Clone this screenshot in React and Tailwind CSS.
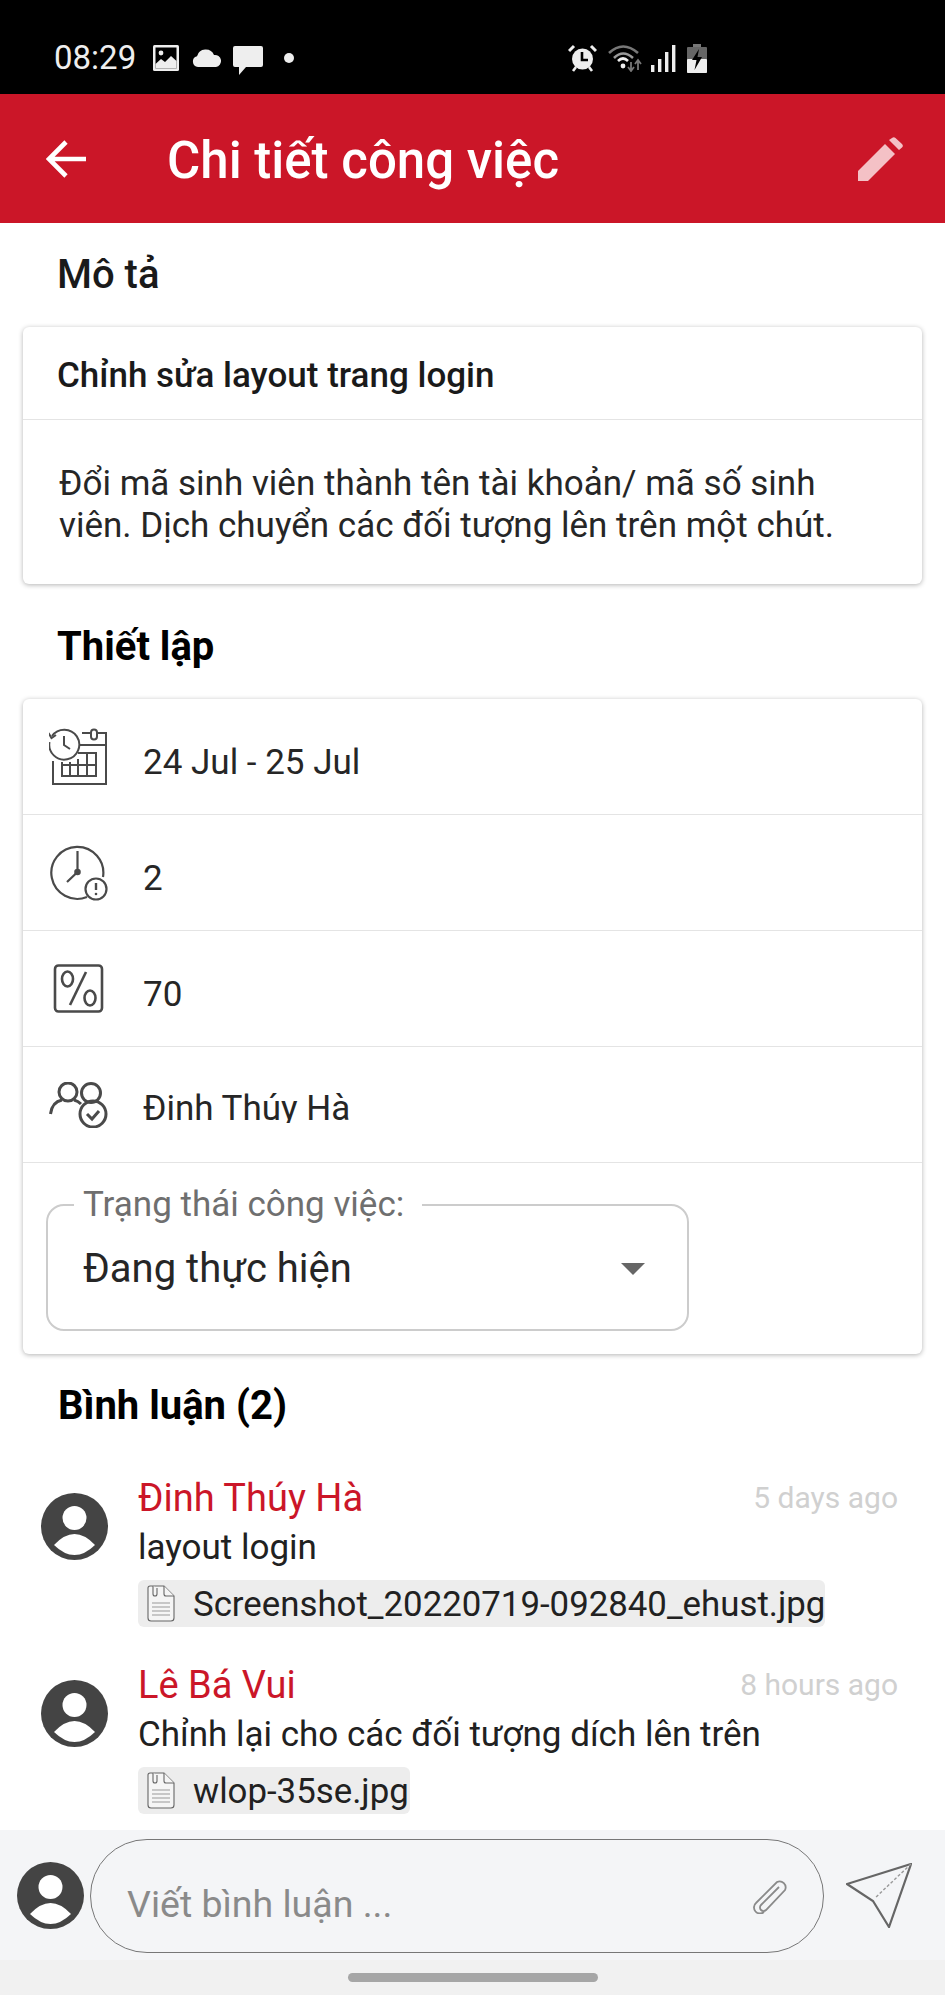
function ImageIcon() {
  return (
    <svg className="w-[26px] h-[27px] shrink-0" viewBox="0 0 26 27">
      <rect x="0" y="0" width="26" height="26" rx="1.5" fill="#eee" />
      <rect x="2.5" y="2.5" width="21" height="21" fill="#000" />
      <circle cx="8" cy="8" r="2.4" fill="#eee" />
      <path d="M2.5 22 L2.5 19 L8 14 L12 17 L18 11 L23.5 16 L23.5 23.5 L2.5 23.5 Z" fill="#eee" />
    </svg>
  );
}

function CloudIcon() {
  return (
    <svg className="w-[30px] h-[18px] shrink-0" viewBox="0 0 30 18">
      <path d="M6 18 a5.5 5.5 0 0 1 -1 -10.8 A9 9 0 0 1 22 6 a6 6 0 0 1 2 12 Z" fill="#eee" />
    </svg>
  );
}

function BubbleIcon() {
  return (
    <svg className="w-[30px] h-[29px] shrink-0" viewBox="0 0 30 29">
      <path d="M2 0 H28 a2 2 0 0 1 2 2 V19 a2 2 0 0 1 -2 2 H13 L6 29 V21 H2 a2 2 0 0 1 -2 -2 V2 a2 2 0 0 1 2 -2 Z" fill="#eee" />
    </svg>
  );
}

function AlarmIcon() {
  return (
    <svg className="w-[29px] h-[28px] shrink-0" viewBox="0 0 29 28">
      <circle cx="14.5" cy="15" r="10.5" fill="#eee" />
      <path d="M14 8 V16 H20" stroke="#000" strokeWidth="2.6" fill="none" />
      <path d="M1 7 L6 2 M28 7 L23 2" stroke="#eee" strokeWidth="3" />
      <path d="M5 27 L8 23 M24 27 L21 23" stroke="#eee" strokeWidth="2.6" />
    </svg>
  );
}

function WifiIcon() {
  return (
    <svg className="w-[34px] h-[28px] shrink-0" viewBox="0 0 34 28">
      <path d="M1 9 Q15 -4 30 9" stroke="#777" strokeWidth="2.6" fill="none" />
      <path d="M6 14 Q15 5 25 14" stroke="#999" strokeWidth="2.6" fill="none" />
      <path d="M10 17 Q15 12 20 17" stroke="#eee" strokeWidth="2.6" fill="none" />
      <circle cx="15" cy="22" r="2.4" fill="#eee" />
      <path d="M23 18 V27 M20 23 L23 27 L26 23" stroke="#777" strokeWidth="1.8" fill="none" />
      <path d="M30 26 V17 M27 20 L30 16 L33 20" stroke="#777" strokeWidth="1.8" fill="none" />
    </svg>
  );
}

function SignalIcon() {
  return (
    <svg className="w-[25px] h-[27px] shrink-0" viewBox="0 0 25 27">
      <rect x="0" y="20" width="3.4" height="7" fill="#eee" />
      <rect x="7" y="14" width="3.4" height="13" fill="#eee" />
      <rect x="14" y="7" width="3.4" height="20" fill="#eee" />
      <rect x="21" y="0" width="3.4" height="27" fill="#eee" />
    </svg>
  );
}

function BatteryIcon() {
  return (
    <svg className="w-[20px] h-[29px] shrink-0" viewBox="0 0 20 29">
      <rect x="6" y="0" width="8" height="3" fill="#777" />
      <rect x="0" y="3" width="20" height="26" rx="1" fill="#666" />
      <rect x="0" y="15" width="20" height="14" rx="1" fill="#eee" />
      <path d="M12 5 L5 16 H9.5 L7.5 26 L15 13 H10.5 Z" fill="#000" />
    </svg>
  );
}

function CalendarClockIcon() {
  return (
    <svg className="w-[60px] h-[58px] shrink-0" viewBox="2 0 60 58" fill="none" stroke="#4a4a4a" strokeWidth="2">
      <path d="M35 5 H43 M51 5 H59 V56 H6 V33" />
      <rect x="44" y="1.5" width="6" height="10" rx="3" />
      <path d="M32 17 H59" />
      <path d="M15 34 V48 H49 V25 H31 M15 37 H49 M23 34 V48 M31 31 V48 M40 25 V48" />
      <path d="M5 8 A15 15 0 1 1 2.5 14" />
      <path d="M1.5 5 L4.5 10 L9 7" />
      <path d="M17 8 V17 L23 21" />
    </svg>
  );
}

function ClockAlertIcon() {
  return (
    <svg className="w-[60px] h-[58px] shrink-0" viewBox="0 0 60 58" fill="none" stroke="#4a4a4a" strokeWidth="2.2">
      <path d="M38 53 A26 26 0 1 1 54 33" />
      <path d="M28.5 7 V28 L18 38" />
      <circle cx="28.5" cy="28" r="2.2" fill="#4a4a4a" />
      <circle cx="47" cy="45" r="10.5" />
      <path d="M47 39 V46" strokeWidth="2.4" />
      <circle cx="47" cy="50" r="1.3" fill="#4a4a4a" stroke="none" />
    </svg>
  );
}

function PercentIcon() {
  return (
    <svg className="w-[60px] h-[50px] shrink-0" viewBox="0 0 60 50" fill="none" stroke="#4a4a4a" strokeWidth="2.6">
      <rect x="6" y="1.5" width="47" height="46" rx="3.5" />
      <ellipse cx="18.5" cy="15" rx="5.5" ry="7.5" />
      <ellipse cx="41" cy="34" rx="5.5" ry="7.5" />
      <path d="M37 8 L21 41" />
    </svg>
  );
}

function PeopleCheckIcon() {
  return (
    <svg className="w-[60px] h-[46px] shrink-0" viewBox="0 0 60 46" fill="none" stroke="#4a4a4a" strokeWidth="3">
      <circle cx="19" cy="10" r="9" />
      <path d="M1.5 32 Q3 20 13 18 M25 18 Q29 19 32 22" />
      <circle cx="42" cy="11" r="9.5" />
      <circle cx="44" cy="32" r="13" />
      <path d="M38 32 L43 37 L50 29" />
    </svg>
  );
}

function Avatar({ className }) {
  return (
    <svg className={className} viewBox="0 0 67 67">
      <circle cx="33.5" cy="33.5" r="33.5" fill="#444444" />
      <ellipse cx="33.5" cy="25" rx="12" ry="12" fill="#fff" />
      <path d="M13 52 Q33.5 30 54 52 Q33.5 72 13 52 Z" fill="#fff" />
    </svg>
  );
}

function FileIcon() {
  return (
    <svg className="w-[28px] h-[37px] shrink-0" viewBox="0 0 28 37" fill="#f5f5f5" stroke="#666" strokeWidth="1.1">
      <path d="M3 1 H17 L27 11 V33 a3 3 0 0 1 -3 3 H4 a3 3 0 0 1 -3 -3 V3 a2 2 0 0 1 2 -2 Z" />
      <path d="M17 1 V9 a2 2 0 0 0 2 2 H27" />
      <path d="M6 1 V9 a2 2 0 0 0 4 0 V3" />
      <path d="M5 18 H23 M5 22 H23 M5 26 H23 M5 30 H23" stroke="#999" />
    </svg>
  );
}

function Comment({ name, time, text, file, fileWidth, top }) {
  return (
    <div className={`flex ${top}`}>
      <div className="w-[138px] shrink-0 flex pl-[41px] pt-[15px]">
        <Avatar className="w-[67px] h-[67px]" />
      </div>
      <div className="flex-1 min-w-0 pr-[47px]">
        <div className="flex items-center justify-between h-[40px]">
          <span className="text-[38px] text-[#cb1628] leading-[40px]">{name}</span>
          <span className="text-[30px] text-[#d0d0d0] leading-[40px]">{time}</span>
        </div>
        <p className="text-[35px] text-[#212121] leading-[40px] mt-[10px]">{text}</p>
        <div className={`${fileWidth} h-[47px] mt-[12px] flex items-center pl-[9px] gap-[18px] bg-[#ededed] rounded-[6px]`}>
          <FileIcon />
          <span className="text-[34.8px] text-[#212121] leading-[40px] whitespace-nowrap">{file}</span>
        </div>
      </div>
    </div>
  );
}

function SettingRow({ icon, children, clip }) {
  return (
    <div className="h-[116px] flex items-center pl-[26px] border-b border-[#e4e4e4]">
      <div className="w-[94px] shrink-0 flex items-center">{icon}</div>
      <div className={clip ? 'h-[48px] pt-[9px]' : 'h-[48px] pt-[11px]'}>
        <div className={clip ? 'h-[33px] overflow-hidden text-[35px] leading-[38px] text-[#262626]' : 'text-[35px] leading-[38px] text-[#262626]'}>{children}</div>
      </div>
    </div>
  );
}

export default function App() {
  return (
    <div className="w-[945px] h-[1995px] flex flex-col overflow-hidden bg-white font-['Roboto',sans-serif]">
      {/* status bar */}
      <div className="h-[94px] shrink-0 bg-black flex items-center pl-[54px] pt-[22px]">
        <span className="text-[33px] text-[#eeeeee] leading-[34px] w-[99px]">08:29</span>
        <ImageIcon />
        <div className="ml-[13px]"><CloudIcon /></div>
        <div className="ml-[11px] mt-[4px]"><BubbleIcon /></div>
        <div className="ml-[21px] w-[10px] h-[10px] rounded-full bg-[#eeeeee]" />
        <div className="ml-[274px] flex items-center">
          <AlarmIcon />
          <div className="ml-[11px]"><WifiIcon /></div>
          <div className="ml-[9px]"><SignalIcon /></div>
          <div className="ml-[11px]"><BatteryIcon /></div>
        </div>
      </div>

      {/* header */}
      <div className="h-[129px] shrink-0 bg-[#cb1628] flex items-center pl-[46px] pr-[42px]">
        <svg className="w-[40px] h-[38px] shrink-0" viewBox="0 0 40 38" fill="none" stroke="#fff" strokeWidth="4.6">
          <path d="M40 19 H3 M20 2 L3 19 L20 36" />
        </svg>
        <h1 className="ml-[81px] flex-1 pt-[5px] text-[51px] font-medium text-white leading-[56px]">Chi tiết công việc</h1>
        <svg className="w-[45px] h-[44px] shrink-0" viewBox="0 0 45 44" fill="#f4c1c6">
          <path d="M0 44 V34 L27 7 L37 17 L10 44 Z" />
          <path d="M31 3 L34 1 a2.5 2.5 0 0 1 3.5 0 L44 7 a2.5 2.5 0 0 1 0 3.5 L41 13 Z" />
        </svg>
      </div>

      {/* content */}
      <div className="flex-1 min-h-0 overflow-hidden">
        <h2 className="ml-[57px] mt-[30px] text-[40px] font-medium leading-[44px] text-[#1a1a1a]">Mô tả</h2>
        <div className="mx-[23px] mt-[30px] bg-white rounded-[6px] shadow-[0_1px_5px_rgba(0,0,0,0.3)]">
          <div className="h-[93px] flex items-center pl-[34px] pt-[6px] border-b border-[#e4e4e4]">
            <span className="text-[35px] font-medium text-[#1a1a1a]">Chỉnh sửa layout trang login</span>
          </div>
          <p className="h-[164px] pt-[43px] pl-[36px] text-[35px] leading-[42px] text-[#262626]">
            Đổi mã sinh viên thành tên tài khoản/ mã số sinh<br />viên. Dịch chuyển các đối tượng lên trên một chút.
          </p>
        </div>

        <h2 className="ml-[57px] mt-[41px] text-[40px] font-bold leading-[44px] text-black">Thiết lập</h2>
        <div className="mx-[23px] mt-[30px] bg-white rounded-[6px] shadow-[0_1px_5px_rgba(0,0,0,0.3)] h-[655px]">
          <SettingRow icon={<CalendarClockIcon />}>24 Jul - 25 Jul</SettingRow>
          <SettingRow icon={<ClockAlertIcon />}>2</SettingRow>
          <SettingRow icon={<PercentIcon />}>70</SettingRow>
          <SettingRow icon={<PeopleCheckIcon />} clip>Đinh Thúy Hà</SettingRow>
          {/* status select */}
          <div className="relative ml-[23px] mt-[41px] w-[643px] h-[127px] border-2 border-[#cccccc] rounded-[18px] flex items-center pl-[35px] pr-[42px] pt-[3px]">
            <span className="absolute left-[26px] top-[-19px] pl-[9px] pr-[18px] bg-white text-[35px] leading-[36px] text-[#6f6f6f]">Trạng thái công việc:</span>
            <span className="flex-1 text-[40px] leading-[44px] text-[#262626]">Đang thực hiện</span>
            <svg className="w-[24px] h-[12px] shrink-0" viewBox="0 0 24 12" fill="#666">
              <path d="M0 0 H24 L12 12 Z" />
            </svg>
          </div>
        </div>

        <h2 className="ml-[58px] mt-[30px] text-[40px] font-bold leading-[44px] text-black">Bình luận (2)</h2>
        <Comment top="mt-[50px]" name="Đinh Thúy Hà" time="5 days ago" text="layout login" file="Screenshot_20220719-092840_ehust.jpg" fileWidth="w-[687px]" />
        <Comment top="mt-[38px]" name="Lê Bá Vui" time="8 hours ago" text="Chỉnh lại cho các đối tượng dích lên trên" file="wlop-35se.jpg" fileWidth="w-[272px]" />
      </div>

      {/* comment input */}
      <div className="h-[130px] shrink-0 bg-[#f4f5f7] flex items-center pl-[17px]">
        <Avatar className="w-[67px] h-[67px] shrink-0" />
        <div className="ml-[6px] mt-[2px] w-[734px] h-[114px] rounded-[57px] border-[1.5px] border-[#777777] flex items-center pl-[36px] pr-[34px]">
          <span className="flex-1 pt-[16px] text-[37.5px] leading-[44px] text-[#8a8a8a]">Viết bình luận ...</span>
          <svg className="w-[38px] h-[36px] shrink-0" viewBox="0 0 38 36" fill="none" stroke="#8a8a8a" strokeWidth="1.8">
            <path d="M28 9 L10 27 a3.5 3.5 0 0 0 5 5 L34 12 a6 6 0 0 0 -8 -8 L5 25 a6 6 0 0 0 8 9" />
          </svg>
        </div>
        <svg className="ml-[22px] w-[66px] h-[65px] shrink-0" viewBox="0 0 66 65" fill="none" stroke="#666" strokeWidth="2.2">
          <path d="M65 1 L1 21 L27 38 L43 64 Z" />
          <path d="M65 1 L29 35" strokeDasharray="3 2" stroke="#999" strokeWidth="1.4" />
        </svg>
      </div>

      {/* nav bar */}
      <div className="h-[35px] shrink-0 bg-[#f1f1f1] flex justify-center pt-[13px]">
        <div className="w-[250px] h-[9px] rounded-full bg-[#a6a6a6]" />
      </div>
    </div>
  );
}
